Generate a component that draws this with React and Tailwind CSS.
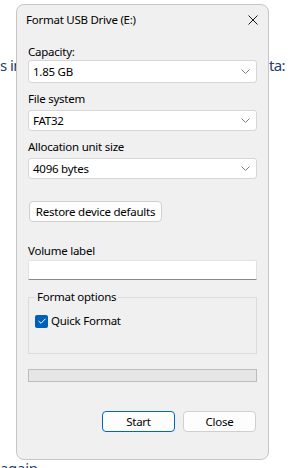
function Chevron() {
    return (
        <svg width="9" height="5" viewBox="0 0 9 5" fill="none" className="text-[#7a7a7a]">
            <polyline points="0.5,0.5 4.5,4.5 8.5,0.5" stroke="currentColor" strokeWidth="1" />
        </svg>
    );
}

function Combo({ value, h }) {
    return (
        <div className={`flex items-center justify-between ${h} rounded-[3px] border border-[#d6d6d6] bg-white pl-[4px] pr-[6px]`}>
            <span>{value}</span>
            <Chevron />
        </div>
    );
}

export default function App() {
    return (
        <div className="relative w-[296px] h-[468px] overflow-hidden bg-white font-['Segoe_UI','Noto_Sans',sans-serif] text-[11.5px] tracking-[-0.25px] leading-[16px] text-black">
            {/* page behind the dialog */}
            <div className="pt-[55px] flex justify-between pr-[11px] text-[15px] leading-[20px] tracking-[-0.6px] text-[#23406f]">
                <span>s in</span>
                <span>nta:</span>
            </div>
            <div className="mt-[383px] text-[15px] leading-[20px] tracking-[-0.3px] text-[#23406f]">again</div>

            {/* Format dialog */}
            <div className="absolute left-[16px] top-[4px] w-[253px] h-[456px] rounded-[8px] border border-[#c6c6c6] bg-[#f0f0f0] flex flex-col">
                <div className="h-[29px] flex items-center justify-between pl-[9px] pr-[10px]">
                    <span>Format USB Drive (E:)</span>
                    <svg width="10" height="10" viewBox="0 0 10 10" className="text-[#1a1a1a]">
                        <path d="M0.5 0.5 L9.5 9.5 M9.5 0.5 L0.5 9.5" stroke="currentColor" strokeWidth="1" />
                    </svg>
                </div>

                <div className="px-[11px] flex flex-col">
                    <div className="mt-[10px]">Capacity:</div>
                    <Combo value="1.85 GB" h="h-[23px]" />

                    <div className="mt-[8px]">File system</div>
                    <div className="mt-[3px]"><Combo value="FAT32" h="h-[21px]" /></div>

                    <div className="mt-[8px]">Allocation unit size</div>
                    <div className="mt-[3px]"><Combo value="4096 bytes" h="h-[21px]" /></div>

                    <button className="mt-[22px] ml-[1px] w-[133px] h-[21px] rounded-[4px] border border-[#d0d0d0] bg-[#fdfdfd] text-center">
                        Restore device defaults
                    </button>

                    <div className="mt-[21px]">Volume label</div>
                    <div className="mt-[1px] h-[20px] rounded-t-[2px] border border-[#e2e2e2] border-b-[#8a8a8a] bg-white" />

                    <div className="mt-[17px] relative h-[57px] border border-[#dcdcdc]">
                        <span className="absolute -top-[9px] left-[6px] px-[2px] bg-[#f0f0f0]">Format options</span>
                        <div className="mt-[15px] ml-[6px] flex items-center gap-[3px]">
                            <span className="w-[13px] h-[13px] rounded-[2px] bg-[#005fb8] flex items-center justify-center">
                                <svg width="8" height="6" viewBox="0 0 8 6" fill="none">
                                    <polyline points="0.5,3 3,5.3 7.5,0.7" stroke="white" strokeWidth="1" />
                                </svg>
                            </span>
                            <span>Quick Format</span>
                        </div>
                    </div>

                    <div className="mt-[15px] h-[13px] border border-[#bcbcbc] bg-[#e6e6e6]" />

                    <div className="mt-[29px] flex justify-end gap-[8px] pr-[1px]">
                        <button className="w-[73px] h-[21px] rounded-[4px] border border-[#0067c0] bg-[#fdfdfd]">Start</button>
                        <button className="w-[73px] h-[21px] rounded-[4px] border border-[#d0d0d0] bg-[#fdfdfd]">Close</button>
                    </div>
                </div>
            </div>
        </div>
    );
}
